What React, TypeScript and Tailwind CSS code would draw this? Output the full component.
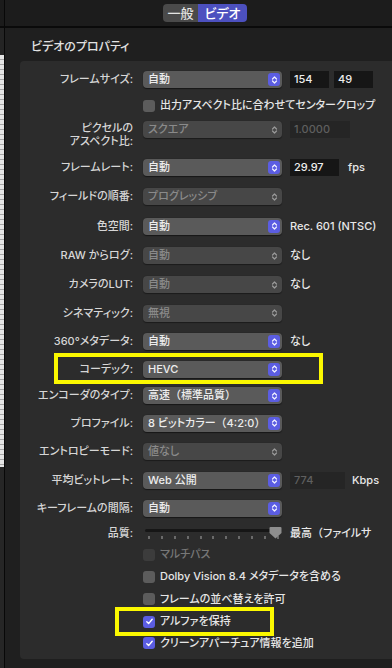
import React from "react";

const FONT = "font-['Inter','Noto_Sans_CJK_JP',sans-serif] [font-feature-settings:'palt'] font-medium";

function P({ children }: { children: React.ReactNode }) {
  return <span className="[font-feature-settings:normal]">{children}</span>;
}

function Chev({ color }: { color: string }) {
  return (
    <svg width="7" height="10" viewBox="0 0 7 10" fill="none">
      <path d="M1.5 4 L3.5 2 L5.5 4" stroke={color} strokeWidth="1.2" strokeLinecap="round" strokeLinejoin="round" />
      <path d="M1.5 6 L3.5 8 L5.5 6" stroke={color} strokeWidth="1.2" strokeLinecap="round" strokeLinejoin="round" />
    </svg>
  );
}

function Popup({ text, enabled = true }: { text: React.ReactNode; enabled?: boolean }) {
  if (enabled) {
    return (
      <div className="w-[139px] h-[17px] rounded-[4px] bg-[#5a5a5a] shadow-[0_0.5px_1px_rgba(0,0,0,0.5)] flex items-center justify-between pl-[5px] pr-[2px]">
        <span className="text-[#ededed] leading-none whitespace-nowrap">{text}</span>
        <div className="w-[12px] h-[13px] rounded-[3px] bg-[#5b5de2] flex items-center justify-center">
          <Chev color="#f2f2ff" />
        </div>
      </div>
    );
  }
  return (
    <div className="w-[139px] h-[17px] rounded-[4px] bg-[#474747] shadow-[0_0.5px_1px_rgba(0,0,0,0.4)] flex items-center justify-between pl-[5px] pr-[4px]">
      <span className="text-[#8a8a8a] leading-none">{text}</span>
      <Chev color="#9a9a9a" />
    </div>
  );
}

function Field({ text, w, disabled = false }: { text: string; w: string; disabled?: boolean }) {
  return (
    <div
      className={
        "h-[17px] flex items-center pl-[4px] leading-none " +
        w +
        (disabled ? " bg-[#252525] text-[#5f5f5f]" : " bg-[#161616] text-[#ededed]")
      }
    >
      {text}
    </div>
  );
}

function Label({ children }: { children: React.ReactNode }) {
  return <div className="w-[113px] text-right text-[#d6d6d6] leading-none shrink-0">{children}</div>;
}

function Row({
  h,
  label,
  children,
  right,
}: {
  h: string;
  label: React.ReactNode;
  children: React.ReactNode;
  right?: React.ReactNode;
}) {
  return (
    <div className={"flex items-center " + h}>
      <Label>{label}</Label>
      <div className="ml-[10px] shrink-0">{children}</div>
      {right ? <div className="ml-[8px] flex items-center text-[#e8e8e8] whitespace-nowrap leading-none">{right}</div> : null}
    </div>
  );
}

function Check({ checked = false, disabled = false }: { checked?: boolean; disabled?: boolean }) {
  if (checked) {
    return (
      <div className="w-[12px] h-[12px] rounded-[3px] bg-[#5b5de2] flex items-center justify-center">
        <svg width="9" height="9" viewBox="0 0 9 9" fill="none">
          <path d="M1.8 4.8 L3.6 6.6 L7.2 2.2" stroke="#ffffff" strokeWidth="1.4" strokeLinecap="round" strokeLinejoin="round" />
        </svg>
      </div>
    );
  }
  return <div className={"w-[12px] h-[12px] rounded-[3px] " + (disabled ? "bg-[#3c3c3c]" : "bg-[#5c5c5c]")} />;
}

function CheckRow({
  h,
  text,
  checked,
  disabled,
}: {
  h: string;
  text: string;
  checked?: boolean;
  disabled?: boolean;
}) {
  return (
    <div className={"flex items-center pl-[123px] " + h}>
      <Check checked={checked} disabled={disabled} />
      <span className={"ml-[5px] leading-none whitespace-nowrap " + (disabled ? "text-[#777777]" : "text-[#e6e6e6]")}>{text}</span>
    </div>
  );
}

function Slider() {
  const ticks = Array.from({ length: 11 }, (_, i) => i);
  return (
    <div className="relative w-[139px] h-[18px]">
      <div className="absolute left-[2px] right-[8px] top-[5px] h-[3px] rounded-full bg-[#161616]" />
      <div className="absolute left-[5px] top-[12px] flex gap-[10.9px]">
        {ticks.map((t) => (
          <div key={t} className="w-[2px] h-[3px] bg-[#6a6a6a]" />
        ))}
      </div>
      <svg className="absolute left-[126px] top-[2px]" width="13" height="13" viewBox="0 0 13 13">
        <path d="M1.5 1 H11.5 Q12.5 1 12.5 2 V7 L6.5 12.5 L0.5 7 V2 Q0.5 1 1.5 1 Z" fill="#8e8e8e" />
      </svg>
    </div>
  );
}

export default function App() {
  return (
    <div className={"relative w-[392px] h-[668px] overflow-hidden bg-[#1f1f1f] flex text-[11px] " + FONT}>
      {/* left strip */}
      <div className="w-[4px] flex flex-col shrink-0">
        <div className="h-[26px] bg-[#1b1b1b]" />
        <div className="h-[2px] bg-[#0a0a0a]" />
        <div className="h-[27px] bg-[#242424]" />
        <div className="h-[412px] bg-[repeating-linear-gradient(to_bottom,#e4e4e4_0px,#e4e4e4_4px,#a4a4a4_4px,#a4a4a4_5px)]" />
        <div className="flex-1 bg-[#262626]" />
      </div>
      <div className="w-[1px] bg-[#080808] shrink-0" />
      {/* main */}
      <div className="flex-1 flex flex-col">
        <div className="h-[26px] bg-[#1c1c1c] flex items-center pl-[158px]">
          <div className="flex h-[18px] rounded-[4px] overflow-hidden text-[13px] leading-none">
            <div className="w-[35px] bg-[#4a4a4a] text-[#e4e4e4] flex items-center justify-center">一般</div>
            <div className="w-[49px] bg-[#4c50bf] text-[#ffffff] flex items-center justify-center">ビデオ</div>
          </div>
        </div>
        <div className="h-[2px] bg-[#0a0a0a]" />
        <div className="h-[33px] pt-[11px] pl-[26px] text-[12px] leading-[16px] text-[#e2e2e2]">ビデオのプロパティ</div>
        <div className="ml-[15px] flex-1 mb-[9px] bg-[#2c2c2c] rounded-l-[4px] pt-[5px] flex flex-col">
          <Row
            h="h-[27px]"
            label="フレームサイズ:"
            right={
              <div className="flex gap-[5px]">
                <Field text="154" w="w-[39px]" />
                <Field text="49" w="w-[39px]" />
              </div>
            }
          >
            <Popup text="自動" />
          </Row>
          <CheckRow h="h-[25px]" text="出力アスペクト比に合わせてセンタークロップ" />
          <div className="flex items-start h-[35px] pt-[3px]">
            <div className="w-[113px] text-right text-[#d6d6d6] leading-[13px] shrink-0 pt-[1px]">
              ピクセルの
              <br />
              アスペクト比:
            </div>
            <div className="ml-[10px]">
              <Popup text="スクエア" enabled={false} />
            </div>
            <div className="ml-[8px]">
              <Field text="1.0000" w="w-[60px]" disabled />
            </div>
          </div>
          <Row
            h="h-[29px]"
            label="フレームレート:"
            right={
              <div className="flex items-center">
                <Field text="29.97" w="w-[49px]" />
                <span className="ml-[9px]">fps</span>
              </div>
            }
          >
            <Popup text="自動" />
          </Row>
          <Row h="h-[29px]" label="フィールドの順番:">
            <Popup text="プログレッシブ" enabled={false} />
          </Row>
          <Row h="h-[30px]" label="色空間:" right="Rec. 601 (NTSC)">
            <Popup text="自動" />
          </Row>
          <Row h="h-[29px]" label="RAW からログ:" right="なし">
            <Popup text="自動" enabled={false} />
          </Row>
          <Row h="h-[29px]" label="カメラのLUT:" right="なし">
            <Popup text="自動" enabled={false} />
          </Row>
          <Row h="h-[28px]" label="シネマティック:">
            <Popup text="無視" enabled={false} />
          </Row>
          <Row h="h-[29px]" label="360°メタデータ:" right="なし">
            <Popup text="自動" />
          </Row>
          <Row h="h-[26px]" label="コーデック:">
            <Popup text="HEVC" />
          </Row>
          <Row h="h-[27px]" label="エンコーダのタイプ:">
            <Popup
              text={
                <>
                  高速<P>（</P>標準品質<P>）</P>
                </>
              }
            />
          </Row>
          <Row h="h-[28px]" label="プロファイル:">
            <Popup
              text={
                <>
                  8 ビットカラー<P>（</P>4:2:0<P>）</P>
                </>
              }
            />
          </Row>
          <Row h="h-[29px]" label="エントロピーモード:">
            <Popup text="値なし" enabled={false} />
          </Row>
          <Row
            h="h-[28px]"
            label="平均ビットレート:"
            right={
              <div className="flex items-center">
                <Field text="774" w="w-[55px]" disabled />
                <span className="ml-[7px]">Kbps</span>
              </div>
            }
          >
            <Popup text="Web 公開" />
          </Row>
          <Row h="h-[28px]" label="キーフレームの間隔:">
            <Popup text="自動" />
          </Row>
          <Row
            h="h-[22px]"
            label="品質:"
            right={
              <>
                最高<P>（</P>ファイルサ
              </>
            }
          >
            <Slider />
          </Row>
          <CheckRow h="h-[21px]" text="マルチパス" disabled />
          <CheckRow h="h-[23px]" text="Dolby Vision 8.4 メタデータを含める" />
          <CheckRow h="h-[22px]" text="フレームの並べ替えを許可" />
          <CheckRow h="h-[23px]" text="アルファを保持" checked />
          <CheckRow h="h-[20px]" text="クリーンアパーチュア情報を追加" checked />
        </div>
      </div>
      {/* highlight boxes */}
      <div className="absolute left-[54px] top-[353px] w-[269px] h-[31px] border-[4px] border-[#fbf800]" />
      <div className="absolute left-[115px] top-[607px] w-[159px] h-[29px] border-[4px] border-[#fbf800]" />
    </div>
  );
}
